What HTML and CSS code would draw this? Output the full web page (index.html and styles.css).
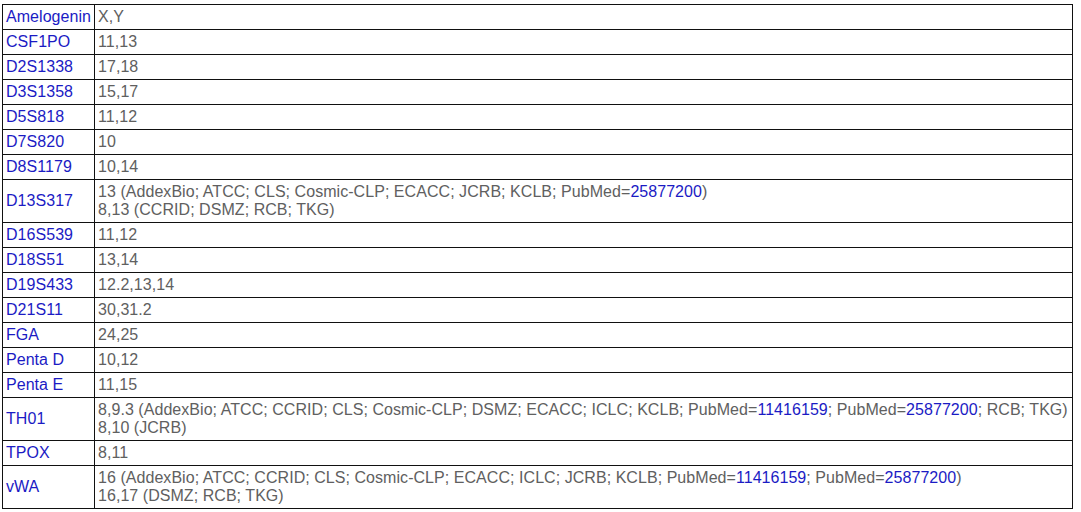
FILE: index.html
```html
<!DOCTYPE html>
<html>
<head>
<meta charset="utf-8">
<link rel="stylesheet" href="styles.css">
</head>
<body>
<table class="str">
<tr><td class="k"><a href="#">Amelogenin</a></td><td class="v">X,Y</td></tr>
<tr><td class="k"><a href="#">CSF1PO</a></td><td class="v">11,13</td></tr>
<tr><td class="k"><a href="#">D2S1338</a></td><td class="v">17,18</td></tr>
<tr><td class="k"><a href="#">D3S1358</a></td><td class="v">15,17</td></tr>
<tr><td class="k"><a href="#">D5S818</a></td><td class="v">11,12</td></tr>
<tr><td class="k"><a href="#">D7S820</a></td><td class="v">10</td></tr>
<tr><td class="k"><a href="#">D8S1179</a></td><td class="v">10,14</td></tr>
<tr><td class="k"><a href="#">D13S317</a></td><td class="v">13 (AddexBio; ATCC; CLS; Cosmic-CLP; ECACC; JCRB; KCLB; PubMed=<a href="#">25877200</a>)<br>8,13 (CCRID; DSMZ; RCB; TKG)</td></tr>
<tr><td class="k"><a href="#">D16S539</a></td><td class="v">11,12</td></tr>
<tr><td class="k"><a href="#">D18S51</a></td><td class="v">13,14</td></tr>
<tr><td class="k"><a href="#">D19S433</a></td><td class="v">12.2,13,14</td></tr>
<tr><td class="k"><a href="#">D21S11</a></td><td class="v">30,31.2</td></tr>
<tr><td class="k"><a href="#">FGA</a></td><td class="v">24,25</td></tr>
<tr><td class="k"><a href="#">Penta D</a></td><td class="v">10,12</td></tr>
<tr><td class="k"><a href="#">Penta E</a></td><td class="v">11,15</td></tr>
<tr><td class="k"><a href="#">TH01</a></td><td class="v">8,9.3 (AddexBio; ATCC; CCRID; CLS; Cosmic-CLP; DSMZ; ECACC; ICLC; KCLB; PubMed=<a href="#">11416159</a>; PubMed=<a href="#">25877200</a>; RCB; TKG)<br>8,10 (JCRB)</td></tr>
<tr><td class="k"><a href="#">TPOX</a></td><td class="v">8,11</td></tr>
<tr><td class="k"><a href="#">vWA</a></td><td class="v">16 (AddexBio; ATCC; CCRID; CLS; Cosmic-CLP; ECACC; ICLC; JCRB; KCLB; PubMed=<a href="#">11416159</a>; PubMed=<a href="#">25877200</a>)<br>16,17 (DSMZ; RCB; TKG)</td></tr>
</table>
</body>
</html>
```
FILE: styles.css
```css
html, body {
  background: #fff;
}
body {
  margin: 4px 2px;
  font-family: "Liberation Sans", Arial, sans-serif;
  font-size: 16px;
  line-height: 18px;
  letter-spacing: 0.05px;
  color: #606060;
}
.str {
  border-collapse: collapse;
  width: 1071px;
}
.str td {
  border: 1px solid #111;
  padding: 3px 3px;
  vertical-align: middle;
  text-align: left;
}
.str td.k {
  white-space: nowrap;
  width: 1px;
}
a {
  color: #1b1bc4;
  text-decoration: none;
}
```
